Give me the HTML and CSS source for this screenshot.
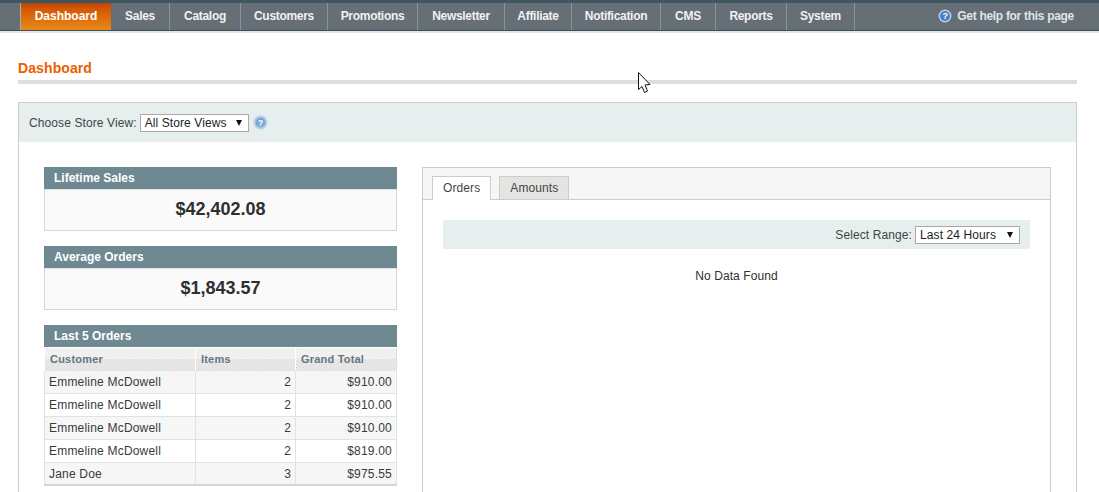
FILE: index.html
```html
<!DOCTYPE html>
<html lang="en">
<head>
  <meta charset="UTF-8">
  <title>Dashboard</title>
  <link rel="stylesheet" href="styles.css">
</head>
<body>
  <div class="page">
    <nav class="nav">
      <ul class="nav-menu">
        <li class="nav-item active">Dashboard</li>
        <li class="nav-item">Sales</li>
        <li class="nav-item">Catalog</li>
        <li class="nav-item">Customers</li>
        <li class="nav-item">Promotions</li>
        <li class="nav-item">Newsletter</li>
        <li class="nav-item">Affiliate</li>
        <li class="nav-item">Notification</li>
        <li class="nav-item">CMS</li>
        <li class="nav-item">Reports</li>
        <li class="nav-item">System</li>
      </ul>
      <div class="nav-help">
        <svg class="help-icon" width="14" height="14" viewBox="0 0 14 14">
          <circle cx="7" cy="7" r="6.5" fill="#b4d0ec"/>
          <circle cx="7" cy="7" r="5" fill="#4a80bd"/>
          <text x="7" y="10.2" text-anchor="middle" class="help-mark">?</text>
        </svg>
        <span>Get help for this page</span>
      </div>
    </nav>

    <main class="content">
      <h3 class="page-title">Dashboard</h3>

      <section class="panel">
        <div class="store-bar">
          <label class="store-label">Choose Store View:</label>
          <div class="fake-select store-select">
            <span>All Store Views</span>
            <span class="arrow"></span>
          </div>
          <svg class="store-help" width="15" height="15" viewBox="0 0 15 15">
            <circle cx="7.5" cy="7.5" r="7" fill="#b5d0ea"/>
            <circle cx="7.5" cy="7.5" r="5" fill="#7aa5d2"/>
            <text x="7.5" y="11" text-anchor="middle" class="help-mark">?</text>
          </svg>
        </div>

        <div class="panel-body">
          <div class="left-col">
            <div class="stat">
              <h4 class="section-head">Lifetime Sales</h4>
              <div class="stat-value">$42,402.08</div>
            </div>
            <div class="stat">
              <h4 class="section-head">Average Orders</h4>
              <div class="stat-value">$1,843.57</div>
            </div>
            <div class="stat">
              <h4 class="section-head">Last 5 Orders</h4>
              <table class="orders">
                <thead>
                  <tr><th class="col-name">Customer</th><th class="col-items">Items</th><th>Grand Total</th></tr>
                </thead>
                <tbody>
                  <tr><td>Emmeline McDowell</td><td class="num">2</td><td class="num">$910.00</td></tr>
                  <tr><td>Emmeline McDowell</td><td class="num">2</td><td class="num">$910.00</td></tr>
                  <tr><td>Emmeline McDowell</td><td class="num">2</td><td class="num">$910.00</td></tr>
                  <tr><td>Emmeline McDowell</td><td class="num">2</td><td class="num">$819.00</td></tr>
                  <tr><td>Jane Doe</td><td class="num">3</td><td class="num">$975.55</td></tr>
                </tbody>
              </table>
            </div>
          </div>

          <div class="chart-box">
            <div class="tabs">
              <div class="tab current">Orders</div>
              <div class="tab">Amounts</div>
            </div>
            <div class="tab-body">
              <div class="range-bar">
                <label>Select Range:</label>
                <div class="fake-select range-select">
                  <span>Last 24 Hours</span>
                  <span class="arrow"></span>
                </div>
              </div>
              <p class="no-data">No Data Found</p>
            </div>
          </div>
        </div>
      </section>
    </main>

    <svg class="cursor" width="15" height="24" viewBox="0 0 15 24">
      <path d="M1.5 1.5 L1.5 18.5 L5 15.5 L7.5 21.5 L10.5 20 L8 14 L13 13.5 Z" fill="#fff" stroke="#111" stroke-width="1"/>
    </svg>
  </div>
</body>
</html>
```

FILE: styles.css
```css
* {
  box-sizing: border-box;
}

html, body {
  margin: 0;
  padding: 0;
}

body {
  font-family: "Liberation Sans", Arial, sans-serif;
  font-size: 12px;
  letter-spacing: 0.1px;
  color: #2f2f2f;
  background: #fff;
}

.page {
  position: relative;
  height: 492px;
  overflow: hidden;
}

/* top nav */
.nav {
  display: flex;
  justify-content: space-between;
  height: 33px;
  padding-left: 20px;
  background: #666e76;
  border-top: 3px solid #3f5561;
  border-bottom: 2px solid #e4e6e6;
  box-shadow: inset 0 -1px 0 #3a4e59;
  color: #f0f2f3;
  font-weight: bold;
  letter-spacing: -0.3px;
}

.nav-menu {
  display: grid;
  grid-template-columns: 90px 59px 71px 87px 90px 87px 67px 89px 55px 71px 68px;
  margin: 0;
  padding: 0;
  list-style: none;
  height: 27px;
  border-left: 1px solid #a9aeb2;
}

.nav-item {
  line-height: 26px;
  text-align: center;
  border-right: 1px solid #8d9398;
}

.nav-item.active {
  border-right: 0;
  color: #fff;
  background: linear-gradient(#b84500, #d45606 20%, #e98a17);
  letter-spacing: 0;
}

.nav-help {
  display: flex;
  align-items: center;
  gap: 5px;
  height: 26px;
  padding-right: 25px;
  color: #dfe5ea;
}

.help-mark {
  font-size: 9px;
  font-weight: bold;
  fill: #fff;
}

/* content */
.content {
  padding: 0 22px 0 18px;
}

.page-title {
  margin: 26px 0 0;
  padding-top: 1px;
  font-size: 14px;
  line-height: 17px;
  color: #eb5e00;
  border-bottom: 4px solid #e0dedb;
  height: 25px;
}

.panel {
  margin-top: 18px;
  border: 1px solid #ccc;
  height: 500px;
}

.store-bar {
  display: flex;
  align-items: center;
  height: 39px;
  padding-left: 10px;
  background: #e6eeee;
}

.store-label {
  margin-right: 3px;
  color: #444;
}

.fake-select {
  display: flex;
  justify-content: space-between;
  align-items: center;
  height: 18px;
  padding: 0 6px 0 4px;
  background: #fff;
  border: 1px solid #aaa;
  color: #222;
}

.arrow {
  width: 0;
  height: 0;
  border-left: 3.5px solid transparent;
  border-right: 3.5px solid transparent;
  border-top: 6px solid #111;
}

.store-select {
  width: 109px;
}

.store-help {
  margin-left: 4px;
}

.panel-body {
  display: flex;
  padding: 25px 25px 0;
}

.left-col {
  width: 353px;
  margin-right: 25px;
  flex: none;
}

.stat {
  margin-bottom: 15px;
}

.section-head {
  margin: 0;
  height: 22px;
  padding-left: 10px;
  background: #6f8992;
  color: #fff;
  font-size: 12px;
  line-height: 22px;
  letter-spacing: 0;
}

.stat-value {
  height: 42px;
  background: #fafafa;
  border: 1px solid #d6d6d6;
  border-top-color: #dfe3e4;
  text-align: center;
  font-size: 18px;
  font-weight: bold;
  line-height: 39px;
  letter-spacing: 0;
  color: #2f2f2f;
}

/* last orders table */
.orders {
  width: 100%;
  margin-top: 1px;
  border-collapse: collapse;
  table-layout: fixed;
  border-bottom: 2px solid #d6d6d6;
  border-left: 1px solid #dadfe0;
  border-right: 1px solid #dadfe0;
}

.orders th {
  height: 22px;
  padding: 1px 0 0 5px;
  text-align: left;
  font-size: 11px;
  letter-spacing: 0.2px;
  color: #67767e;
  border-left: 1px solid #fff;
  background:
    repeating-linear-gradient(135deg, rgba(255, 255, 255, 0.6) 0 1px, transparent 1px 2.12px),
    linear-gradient(#e6e6e6 50%, #d4d4d4 50%);
}

.col-name {
  width: 151px;
}

.col-items {
  width: 100px;
}

.orders td {
  height: 23px;
  padding: 1px 4px 0;
  border: 1px solid #dfe3e4;
  color: #3a3a3a;
  letter-spacing: 0.2px;
}

.orders tbody tr:nth-child(odd) {
  background: #f6f6f6;
}

.orders .num {
  text-align: right;
}

/* chart box with tabs */
.chart-box {
  width: 629px;
  height: 400px;
  border: 1px solid #ccc;
  flex: none;
}

.tabs {
  display: flex;
  gap: 8px;
  height: 32px;
  padding: 8px 0 0 9px;
  background: #f6f6f6;
  border-bottom: 1px solid #ccc;
}

.tab {
  height: 23px;
  padding: 0 10px;
  line-height: 22px;
  background: #e4e4e2;
  border: 1px solid #ccc;
  border-bottom: 0;
  color: #444;
}

.tab.current {
  height: 24px;
  background: #fff;
}

.tab-body {
  padding: 20px 20px 0;
}

.range-bar {
  display: flex;
  justify-content: flex-end;
  align-items: center;
  height: 29px;
  padding-right: 10px;
  background: #e6eeee;
  color: #444;
}

.range-select {
  width: 105px;
  margin-left: 3px;
}

.no-data {
  margin: 20px 0 0;
  text-align: center;
  line-height: 14px;
}

.cursor {
  position: absolute;
  left: 637px;
  top: 71px;
}
```
